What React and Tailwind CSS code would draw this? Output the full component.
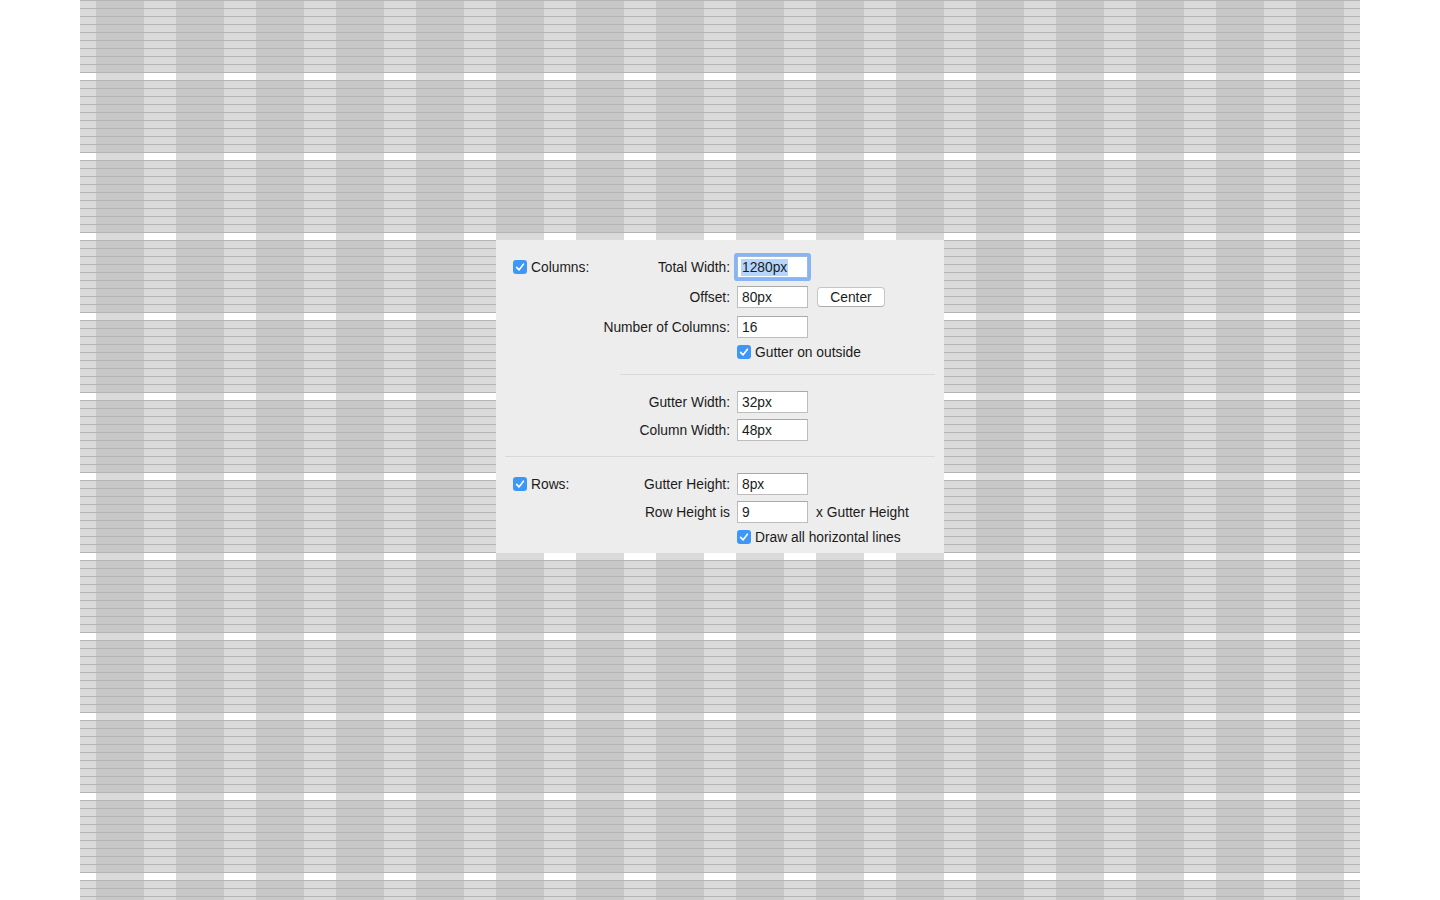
import React from "react";

const LINES =
  "bg-[image:repeating-linear-gradient(to_bottom,#b4b4b4_0px,#b4b4b4_1px,transparent_1px,transparent_8px)]";

function Band({ gutter }) {
  const gBg = gutter ? "bg-white" : "bg-[#dadada]";
  const cBg = gutter ? "bg-[#dadada]" : "bg-[#c7c7c7]";
  const cells = [<div key="g0" className={`w-[16px] ${gBg} ${LINES}`} />];
  for (let i = 0; i < 16; i++) {
    cells.push(<div key={"c" + i} className={`w-[48px] ${cBg} ${LINES}`} />);
    cells.push(
      <div
        key={"g" + (i + 1)}
        className={`${i < 15 ? "w-[32px]" : "w-[16px]"} ${gBg} ${LINES}`}
      />
    );
  }
  return <div className={`flex ${gutter ? "h-[8px]" : "h-[72px]"}`}>{cells}</div>;
}

function Grid() {
  const blocks = [];
  for (let k = 0; k < 12; k++) {
    blocks.push(
      <div key={k} className="flex flex-col">
        <Band />
        <Band gutter />
      </div>
    );
  }
  return <div className="ml-[80px] w-[1280px] flex flex-col">{blocks}</div>;
}

function Check({ label }) {
  return (
    <div className="flex items-center gap-[4px]">
      <div className="w-[14px] h-[14px] rounded-[3px] bg-[#3d97f9] flex items-center justify-center">
        <svg width="14" height="14" viewBox="0 0 14 14">
          <path
            d="M3.6 7.4 L6 9.9 L10.4 4.2"
            fill="none"
            stroke="white"
            strokeWidth="1.6"
            strokeLinecap="round"
            strokeLinejoin="round"
          />
        </svg>
      </div>
      <span className="leading-none translate-y-[1px]">{label}</span>
    </div>
  );
}

function Field({ value, focused }) {
  if (focused) {
    return (
      <div className="w-[71px] h-[22px] bg-white border border-[#9fb8dc] rounded-[1px] shadow-[0_0_0_3px_#86b4f5] flex items-center pl-[3px]">
        <span className="bg-[#b4d6fe] leading-[17px] px-[1px]">{value}</span>
      </div>
    );
  }
  return (
    <div className="w-[71px] h-[22px] bg-white border border-[#bdbdbd] border-t-[#a9a9a9] flex items-center pl-[4px]">
      <span className="leading-none translate-y-[1px]">{value}</span>
    </div>
  );
}

function Row({ left, label, children, className = "" }) {
  return (
    <div className={`flex items-center h-[22px] ${className}`}>
      <div className="w-[234px] pl-[17px] flex items-center justify-between">
        <div>{left}</div>
        <span className="leading-none translate-y-[1px]">{label}</span>
      </div>
      <div className="ml-[7px] flex items-center">{children}</div>
    </div>
  );
}

function Panel() {
  return (
    <div className="absolute left-[496px] top-[240px] w-[448px] h-[313px] bg-[#ededed] flex flex-col pt-[16px] text-[13.8px] text-[#1b1b1b]">
      <Row left={<Check label="Columns:" />} label="Total Width:">
        <Field value="1280px" focused />
      </Row>
      <Row label="Offset:" className="mt-[8px]">
        <Field value="80px" />
        <div className="ml-[9px] w-[68px] h-[20px] bg-white border border-[#c6c6c6] border-b-[#adadad] rounded-[4px] flex items-center justify-center">
          <span className="leading-none translate-y-[1px]">Center</span>
        </div>
      </Row>
      <Row label="Number of Columns:" className="mt-[8px]">
        <Field value="16" />
      </Row>
      <div className="mt-[7px] h-[14px] ml-[241px] flex items-center">
        <Check label="Gutter on outside" />
      </div>
      <div className="mt-[15px] h-px ml-[124px] w-[315px] bg-[#d9d9d9]" />
      <Row label="Gutter Width:" className="mt-[16px]">
        <Field value="32px" />
      </Row>
      <Row label="Column Width:" className="mt-[6px]">
        <Field value="48px" />
      </Row>
      <div className="mt-[15px] h-px ml-[9px] w-[430px] bg-[#d9d9d9]" />
      <Row left={<Check label="Rows:" />} label="Gutter Height:" className="mt-[16px]">
        <Field value="8px" />
      </Row>
      <Row label="Row Height is" className="mt-[6px]">
        <Field value="9" />
        <span className="ml-[8px] leading-none translate-y-[1px]">x Gutter Height</span>
      </Row>
      <div className="mt-[7px] h-[14px] ml-[241px] flex items-center">
        <Check label="Draw all horizontal lines" />
      </div>
    </div>
  );
}

export default function App() {
  return (
    <div className="relative w-[1440px] h-[900px] overflow-hidden bg-white font-['Liberation_Sans',Arial,sans-serif]">
      <Grid />
      <Panel />
    </div>
  );
}
